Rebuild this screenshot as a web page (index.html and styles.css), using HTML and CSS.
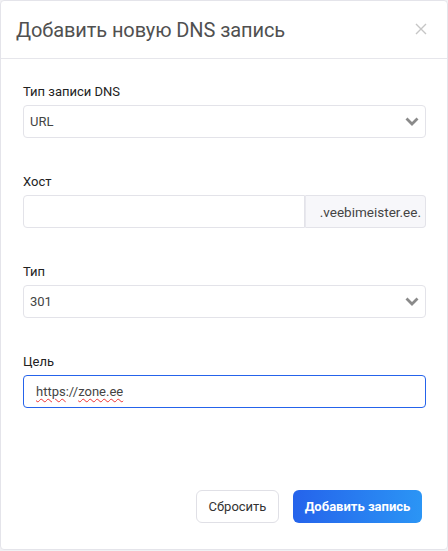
FILE: index.html
```html
<!DOCTYPE html>
<html lang="ru">
<head>
<meta charset="utf-8">
<title>Добавить новую DNS запись</title>
<link rel="stylesheet" href="styles.css">
</head>
<body>
<div class="modal">
  <div class="modal-header">
    <h2 class="modal-title">Добавить новую DNS запись</h2>
    <svg class="close" width="12" height="12" viewBox="0 0 12 12"><path d="M1 1 L11 11 M11 1 L1 11" stroke="#c6c6c6" stroke-width="1.4" fill="none"/></svg>
  </div>
  <div class="modal-body">
    <div class="field">
      <div class="label">Тип записи DNS</div>
      <div class="select">
        <span>URL</span>
        <svg class="chev" width="14" height="9" viewBox="0 0 14 9"><polyline points="1.5,1.5 7,7 12.5,1.5" fill="none" stroke="#8a8a8a" stroke-width="2.8"/></svg>
      </div>
    </div>
    <div class="field">
      <div class="label">Хост</div>
      <div class="input-group">
        <div class="input"></div>
        <div class="addon">.veebimeister.ee.</div>
      </div>
    </div>
    <div class="field">
      <div class="label">Тип</div>
      <div class="select">
        <span>301</span>
        <svg class="chev" width="14" height="9" viewBox="0 0 14 9"><polyline points="1.5,1.5 7,7 12.5,1.5" fill="none" stroke="#8a8a8a" stroke-width="2.8"/></svg>
      </div>
    </div>
    <div class="field">
      <div class="label">Цель</div>
      <div class="input focused"><span class="sp">https</span>://<span class="sp">zone.ee</span></div>
    </div>
  </div>
  <div class="modal-footer">
    <button class="btn btn-secondary">Сбросить</button>
    <button class="btn btn-primary">Добавить запись</button>
  </div>
</div>
</body>
</html>
```
FILE: styles.css
```css
* { box-sizing: border-box; }
html, body { margin: 0; padding: 0; background: #f1f1f4; }
body { font-family: Roboto, "Noto Sans", sans-serif; color: #333; }
.modal {
  width: 448px;
  height: 550px;
  background: #fff;
  border: 1px solid #e4e4ea;
  border-radius: 4px;
  display: flex;
  flex-direction: column;
}
.modal-header {
  height: 58px;
  border-bottom: 1px solid #e6e6eb;
  display: flex;
  align-items: center;
  justify-content: space-between;
  padding: 0 20px 0 15px;
}
.modal-title {
  margin: 0;
  font-size: 20px;
  font-weight: 400;
  color: #505050;
  line-height: 24px;
  letter-spacing: -0.1px;
}
.close { margin-top: -2px; }
.modal-body {
  flex: 1;
  padding: 25px 21px 0 22px;
}
.field { margin-bottom: 36px; }
.label {
  font-size: 13px;
  line-height: 16px;
  font-weight: 400;
  color: #222;
  margin-bottom: 5px;
}
.select {
  height: 33px;
  border: 1px solid #e3e3e9;
  border-radius: 4px;
  display: flex;
  align-items: center;
  justify-content: space-between;
  padding: 0 6px 0 6px;
  font-size: 13px;
  color: #444;
}
.input-group { display: flex; height: 33px; }
.input-group .input {
  flex: 1;
  border-radius: 4px 0 0 4px;
}
.input {
  height: 33px;
  border: 1px solid #e3e3e9;
  border-radius: 4px;
  padding: 0 12px;
  font-size: 13px;
  line-height: 31px;
  color: #444;
}
.input.focused { border-color: #2563eb; }
.sp { text-decoration: underline wavy #e33; text-decoration-thickness: 1px; text-underline-offset: 2px; }
.addon {
  width: 121px;
  border: 1px solid #e3e3e9;
  border-left: 1px solid #e8e8ee;
  border-radius: 0 4px 4px 0;
  background: #f7f7fa;
  font-size: 13.5px;
  color: #444;
  display: flex;
  align-items: center;
  justify-content: flex-end;
  padding-right: 4px;
}
.modal-footer {
  display: flex;
  justify-content: flex-end;
  gap: 14px;
  padding: 0 25px 26px 0;
}
.btn {
  height: 33px;
  border-radius: 6px;
  font-family: Roboto, "Noto Sans", sans-serif;
  font-size: 13px;
  cursor: pointer;
}
.btn-secondary {
  width: 83px;
  padding: 0;
  background: #fff;
  border: 1px solid #e0e0e6;
  color: #333;
  font-weight: 400;
}
.btn-primary {
  width: 129px;
  padding: 0;
  border: none;
  color: #fff;
  font-weight: 700;
  background: linear-gradient(90deg, #2563eb, #2b95f5);
}
```
